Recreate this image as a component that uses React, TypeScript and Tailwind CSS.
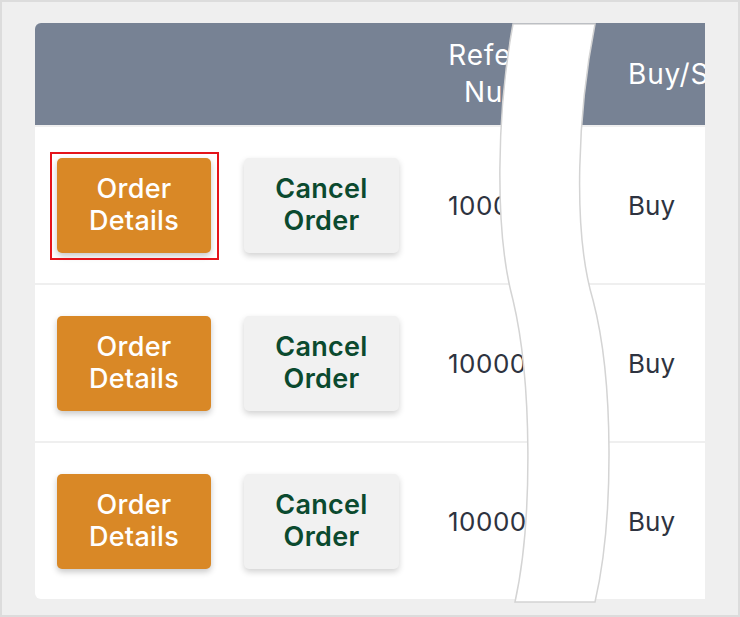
const rows = [
  { ref: "10000001", side: "Buy", highlight: true },
  { ref: "10000002", side: "Buy", highlight: false },
  { ref: "10000003", side: "Buy", highlight: false },
];

const Wave = () => (
  <svg
    className="absolute inset-0 pointer-events-none"
    width={740}
    height={617}
    viewBox="0 0 740 617"
  >
    <path
      d="M513,24 L595,24 C578,110 572,230 593,300 C614,380 614,520 595,602 L515,602 C533,520 532,380 513,300 C494,230 497,110 513,24 Z"
      fill="#ffffff"
      stroke="#d4d4d4"
      strokeWidth={1.5}
    />
  </svg>
);

const OrderRow = ({ item }: { item: (typeof rows)[number] }) => (
  <div className="flex h-[156px] items-center bg-white">
    <div className="relative ml-[22px]">
      <button
        type="button"
        className="flex h-[95px] w-[154px] items-center justify-center rounded-[5px] bg-[#d98826] px-4 text-[27px] font-medium leading-[32px] tracking-[0.01em] text-white shadow-[0_3px_6px_rgba(0,0,0,0.22)]"
      >
        Order Details
      </button>
      {item.highlight && (
        <div className="absolute -left-[7px] -top-[6px] -right-[8px] -bottom-[7px] border-2 border-[#e4141b]" />
      )}
    </div>
    <button
      type="button"
      className="ml-[33px] flex h-[95px] w-[155px] items-center justify-center rounded-[5px] bg-[#f1f1f1] px-4 text-[27px] font-semibold leading-[32px] tracking-[0.01em] text-[#0b4a2f] shadow-[0_3px_6px_rgba(0,0,0,0.18)]"
    >
      Cancel Order
    </button>
    <div className="w-[220px] shrink-0 pl-[49px] pt-[1px] text-[26px] tracking-[0.02em] text-[#2e3340]">
      {item.ref}
    </div>
    <div className="shrink-0 whitespace-nowrap pl-[9px] text-[26px] text-[#2e3340]">
      {item.side}
    </div>
  </div>
);

export default function App() {
  return (
    <div
      className="relative h-[617px] w-[740px] overflow-hidden"
      style={{ fontFamily: 'Inter, "Noto Sans CJK JP", sans-serif' }}
    >
      <div className="h-full w-full border-2 border-[#dcdcdc] bg-[#efefef] pl-[33px] pt-[21px]">
        <div className="w-[670px] overflow-hidden rounded-l-[6px] bg-[#efefef]">
          <div className="flex h-[102px] items-center whitespace-nowrap bg-[#778294] text-[28px] leading-[37px] tracking-[0.03em] text-white">
            <div className="w-[385px] shrink-0" />
            <div className="w-[199px] shrink-0 text-center">
              Reference
              <br />
              Number
            </div>
            <div className="shrink-0 pl-[9px]">Buy/Sell</div>
          </div>
          <div className="flex flex-col gap-[2px] pt-[2px]">
            {rows.map((item) => (
              <OrderRow key={item.ref} item={item} />
            ))}
          </div>
        </div>
      </div>
      <Wave />
    </div>
  );
}
